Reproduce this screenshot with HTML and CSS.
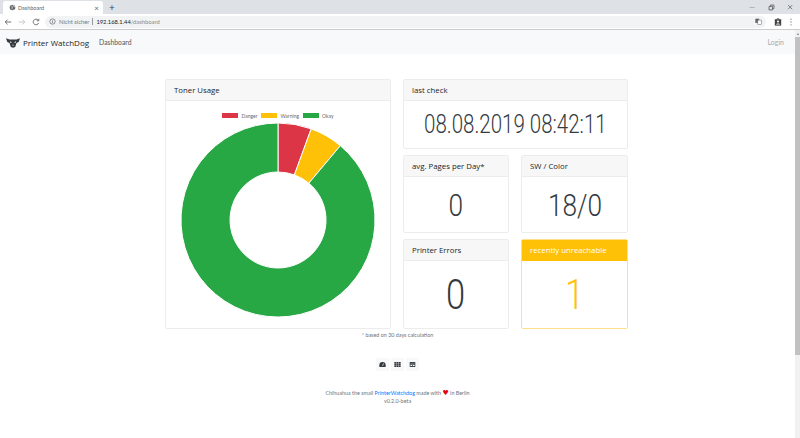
FILE: index.html
```html
<!DOCTYPE html>
<html lang="de">
<head>
    <meta charset="UTF-8">
    <title>Dashboard</title>
    <link rel="stylesheet" href="styles.css">
</head>
<body>
    <div class="tabstrip">
        <div class="tab">
            <svg class="tab-icon" viewBox="0 0 10 10"><circle cx="5" cy="5" r="4" fill="#5f6368"/><path d="M3 2.500 5 4 4 6 6 8M6 1.500 7 3.500 9 4.500" stroke="#fff" fill="none"/></svg>
            <span class="tab-title">Dashboard</span>
            <span class="tab-close">×</span>
        </div>
        <span class="tab-new">+</span>
        <div class="window-btns">
            <svg viewBox="0 0 10 10"><path d="M1 5h7" stroke="#9aa0a6"/></svg>
            <svg viewBox="0 0 10 10"><path d="M1.500 3.500h5v5h-5zM3.500 3V1.500h5v5H7" stroke="#444" fill="none"/></svg>
            <svg viewBox="0 0 10 10"><path d="M1.500 1.500l6 6M7.500 1.500l-6 6" stroke="#555" fill="none"/></svg>
        </div>
    </div>
    <div class="toolbar">
        <svg class="nav-icon" viewBox="0 0 10 10"><path d="M9 5H1.500M4.500 2 1.500 5l3 3" stroke="#5f6368" fill="none" stroke-width="1.100"/></svg>
        <svg class="nav-icon" viewBox="0 0 10 10"><path d="M1 5h7.500M5.500 2l3 3-3 3" stroke="#bdc1c6" fill="none" stroke-width="1.100"/></svg>
        <svg class="nav-icon" viewBox="0 0 10 10"><path d="M8.300 6.200A3.500 3.500 0 1 1 7.700 2.700M8.500 1v2.500H6" stroke="#5f6368" fill="none" stroke-width="1.100"/></svg>
        <div class="omnibox">
            <svg class="info-icon" viewBox="0 0 10 10"><circle cx="5" cy="5" r="3.800" stroke="#5f6368" fill="none"/><path d="M5 4.500v2.500M5 3v1" stroke="#5f6368"/></svg>
            <span class="not-secure">Nicht sicher</span>
            <span class="url-sep"></span>
            <span class="url-host">192.168.1.44</span><span class="url-path">/dashboard</span>
            <svg class="translate-icon" viewBox="0 0 10 10"><rect x="0.500" y="1" width="5.500" height="6" fill="#5f6368"/><rect x="4" y="3" width="5.500" height="6" fill="#fff" stroke="#5f6368" stroke-width="0.700"/></svg>
        </div>
        <svg class="profile-icon" viewBox="0 0 10 10"><path d="M1 1.500h8v8H1z" fill="#444"/><circle cx="5" cy="4.300" r="1.300" fill="#fff"/><path d="M2.500 8c.5-1.500 4.500-1.500 5 0z" fill="#fff"/><path d="M3.500 0.500h3v1h-3z" fill="#444"/></svg>
        <svg class="menu-icon" viewBox="0 0 4 10"><circle cx="2" cy="1.500" r="0.800" fill="#777"/><circle cx="2" cy="5" r="0.800" fill="#777"/><circle cx="2" cy="8.500" r="0.800" fill="#777"/></svg>
    </div>

    <div class="viewport">
        <div class="page">
            <nav class="navbar">
                <svg class="logo" viewBox="0 0 16 12"><path d="M0 1 4 2.500h8L16 1 14.500 5.500 12 6.500 10.500 11 8 12 5.500 11 4 6.500 1.500 5.500z" fill="#343a40"/><path d="M4.500 4.500 7 6 4.800 6.300zM11.500 4.500 9 6l2.200.300zM7 8.500h2L8 10z" fill="#f8f9fa"/></svg>
                <span class="brand">Printer WatchDog</span>
                <a class="nav-link">Dashboard</a>
                <a class="nav-login">Login</a>
            </nav>

            <main class="dashboard">
                <section class="card toner">
                    <h5 class="card-header">Toner Usage</h5>
                    <div class="chart-body">
                        <div class="legend">
                            <span class="swatch red"></span><span class="legend-label">Danger</span>
                            <span class="swatch yellow"></span><span class="legend-label">Warning</span>
                            <span class="swatch green"></span><span class="legend-label">Okay</span>
                        </div>
                        <svg class="donut" viewBox="0 0 196 196">
                            <path d="M98 1A97 97 0 0 1 131.200 6.850L114.400 52.900A48 48 0 0 0 98 50Z" fill="#dc3545" stroke="#fff"/>
                            <path d="M131.200 6.850A97 97 0 0 1 160.350 23.700L128.850 61.200A48 48 0 0 0 114.400 52.900Z" fill="#ffc107" stroke="#fff"/>
                            <path d="M160.350 23.700A97 97 0 1 1 98 1L98 50A48 48 0 1 0 128.850 61.200Z" fill="#28a745" stroke="#fff"/>
                        </svg>
                    </div>
                </section>

                <div class="stats">
                    <section class="card stat-wide">
                        <h5 class="card-header">last check</h5>
                        <div class="stat-value date"><span>08.08.2019 08:42:11</span></div>
                    </section>
                    <section class="card">
                        <h5 class="card-header">avg. Pages per Day*</h5>
                        <div class="stat-value"><span>0</span></div>
                    </section>
                    <section class="card">
                        <h5 class="card-header">SW / Color</h5>
                        <div class="stat-value"><span>18/0</span></div>
                    </section>
                    <section class="card">
                        <h5 class="card-header">Printer Errors</h5>
                        <div class="stat-value big"><span>0</span></div>
                    </section>
                    <section class="card warning">
                        <h5 class="card-header">recently unreachable</h5>
                        <div class="stat-value big"><span>1</span></div>
                    </section>
                </div>
            </main>

            <p class="note">* based on 30 days calculation</p>

            <div class="view-btns">
                <span class="view-btn"><svg viewBox="0 0 10 10"><path d="M0.500 8.500V6a4.500 4.500 0 0 1 9 0v2.500z" fill="#343a40"/><path d="M5 7 6.500 3.500" stroke="#fff"/></svg></span>
                <span class="view-btn"><svg viewBox="0 0 10 10"><path d="M0.500 1.500h2.700v2H0.500zM3.700 1.500h2.600v2H3.700zM6.800 1.500h2.700v2H6.800zM0.500 4h2.700v2H0.500zM3.700 4h2.600v2H3.700zM6.800 4h2.700v2H6.800zM0.500 6.500h2.700v2H0.500zM3.700 6.500h2.600v2H3.700zM6.800 6.500h2.700v2H6.800z" fill="#343a40"/></svg></span>
                <span class="view-btn"><svg viewBox="0 0 10 10"><path d="M1 1.500h8v7H1z" fill="#343a40"/><path d="M2 3.800h6v1H2zM2 5.800h2.500v1.500H2zM5.500 5.800H8v1.500H5.500z" fill="#fff"/></svg></span>
            </div>

            <footer class="footer">
                <div>Chihuahua the small <a class="footer-link">PrinterWatchdog</a> made with <span class="heart">♥</span> in Berlin</div>
                <div>v0.2.0-beta</div>
            </footer>
        </div>
        <div class="scrollbar">
            <span class="scroll-arrow"></span>
            <span class="scroll-thumb"></span>
        </div>
    </div>
</body>
</html>
```

FILE: styles.css
```css
html, body {
    margin: 0;
    height: 438px;
    overflow: hidden;
}

body {
    font-family: Lato, "Open Sans", sans-serif;
    color: #212529;
    background: #fff;
    display: flex;
    flex-direction: column;
}

/* browser window */
.tabstrip {
    height: 14px;
    background: #dee1e6;
    display: flex;
    align-items: flex-end;
    padding-left: 3px;
    flex: none;
}

.tab {
    width: 100px;
    height: 13px;
    background: #fff;
    border-radius: 3px 3px 0 0;
    display: flex;
    align-items: center;
    box-sizing: border-box;
    padding: 0 4px 0 6px;
}

.tab-icon {
    width: 7px;
    height: 7px;
    margin-right: 2px;
}

.tab-title {
    font-size: 5.500px;
    color: #5f6368;
    flex: 1;
}

.tab-close {
    font-size: 8px;
    line-height: 8px;
    color: #5f6368;
}

.tab-new {
    font-size: 10px;
    line-height: 13px;
    color: #444;
    margin-left: 6px;
}

.window-btns {
    margin-left: auto;
    align-self: center;
    display: flex;
    gap: 12px;
    padding-right: 6px;
}

.window-btns svg {
    width: 7px;
    height: 7px;
    display: block;
}

.toolbar {
    height: 15px;
    background: #fff;
    border-bottom: 1px solid #ccc;
    display: flex;
    align-items: center;
    padding-left: 4px;
    flex: none;
}

.nav-icon {
    width: 8px;
    height: 8px;
    margin-right: 6px;
}

.omnibox {
    flex: 1;
    height: 12px;
    margin-left: -1px;
    background: #f1f3f4;
    border-radius: 6px;
    display: flex;
    align-items: center;
    padding: 0 4px 0 4px;
    font-size: 5.800px;
}

.info-icon {
    width: 7px;
    height: 7px;
    margin-right: 3px;
}

.not-secure {
    color: #777;
}

.url-sep {
    width: 1px;
    height: 7px;
    background: #999;
    margin: 0 3px;
}

.url-host {
    color: #222;
}

.url-path {
    color: #888;
}

.translate-icon {
    width: 7px;
    height: 7px;
    margin-left: auto;
}

.profile-icon {
    width: 8px;
    height: 8px;
    margin: 0 0 0 8px;
}

.menu-icon {
    width: 4px;
    height: 8px;
    margin: 0 7px 0 7px;
}

/* page */
.viewport {
    flex: 1;
    display: flex;
    min-height: 0;
}

.page {
    flex: 1;
    min-width: 0;
}

.scrollbar {
    width: 5px;
    background: #f1f1f1;
    display: flex;
    flex-direction: column;
    align-items: center;
}

.scroll-arrow {
    margin-top: 3px;
    border: 1.500px solid transparent;
    border-top: 0;
    border-bottom: 2px solid #777;
}

.scroll-thumb {
    width: 100%;
    height: 318px;
    margin-top: 2px;
    background: #c1c1c1;
}

.navbar {
    height: 24px;
    background: #f8f9fa;
    display: flex;
    align-items: center;
    padding: 0 11px 0 6px;
}

.logo {
    width: 14px;
    height: 11px;
    margin-right: 3px;
}

.brand {
    font-family: "Open Sans", sans-serif;
    font-size: 8px;
    font-weight: 500;
    color: #212529;
    margin-right: 10px;
}

.nav-link {
    font-size: 6.800px;
    color: #555;
}

.nav-login {
    margin-left: auto;
    font-size: 7px;
    color: #aaa;
}

.dashboard {
    display: grid;
    grid-template-columns: 226px 225px;
    gap: 12px;
    justify-content: start;
    margin: 25px 0 0 165px;
}

.card {
    border: 1px solid #ececec;
    border-radius: 2px;
    background: #fff;
    display: flex;
    flex-direction: column;
    box-sizing: border-box;
}

.card-header {
    margin: 0;
    height: 21px;
    box-sizing: border-box;
    padding: 0 8px;
    background: #f7f7f7;
    border-bottom: 1px solid #ececec;
    font-family: "Open Sans", sans-serif;
    font-size: 7.800px;
    font-weight: 500;
    line-height: 20px;
    color: #212529;
    white-space: nowrap;
}

.toner {
    height: 250px;
}

.chart-body {
    flex: 1;
    display: flex;
    flex-direction: column;
    align-items: center;
}

.legend {
    display: flex;
    align-items: center;
    height: 9px;
    margin-top: 10px;
    font-size: 5px;
    color: #666;
}

.swatch {
    width: 16px;
    height: 5px;
    margin-right: 3px;
}

.swatch.red {
    background: #dc3545;
}

.swatch.yellow {
    background: #ffc107;
}

.swatch.green {
    background: #28a745;
}

.legend-label {
    margin-right: 4px;
}

.legend-label:last-child {
    margin-right: 0;
}

.donut {
    width: 196px;
    height: 196px;
    margin-top: 2px;
}

.stats {
    display: grid;
    grid-template-columns: 106px 107px;
    grid-template-rows: 70px 78px 90px;
    gap: 6px 12px;
}

.stat-wide {
    grid-column: 1 / 3;
}

.stat-value {
    flex: 1;
    display: flex;
    align-items: center;
    justify-content: center;
    font-family: Roboto, sans-serif;
    font-size: 32px;
    font-weight: 300;
    color: #343a40;
}

/* the reference digits are narrower than Roboto Light */
.stat-value span {
    transform: scaleX(0.82);
    white-space: nowrap;
}

.stat-value.date {
    font-size: 25px;
}

.stat-value.big {
    font-size: 42px;
}

.warning {
    border-color: #ffe08a;
}

.warning .card-header {
    background: #ffc107;
    border-bottom-color: #ffc107;
    color: #fff;
}

.warning .stat-value {
    color: #ffc107;
}

.note {
    margin: 2px 0 0;
    padding-left: 0;
    text-align: center;
    font-size: 5.400px;
    line-height: 8px;
    color: #6c757d;
}

.view-btns {
    display: flex;
    justify-content: center;
    gap: 2px;
    margin-top: 19px;
}

.view-btn {
    width: 13px;
    height: 13px;
    background: #f8f9fa;
    display: flex;
    align-items: center;
    justify-content: center;
}

.view-btn svg {
    width: 7px;
    height: 7px;
}

.footer {
    margin-top: 18px;
    text-align: center;
    font-size: 5.400px;
    line-height: 8px;
    color: #6c757d;
}

.footer-link {
    color: #007bff;
}

.heart {
    color: #e3000f;
    font-family: "DejaVu Sans", sans-serif;
    font-size: 7px;
}
```
